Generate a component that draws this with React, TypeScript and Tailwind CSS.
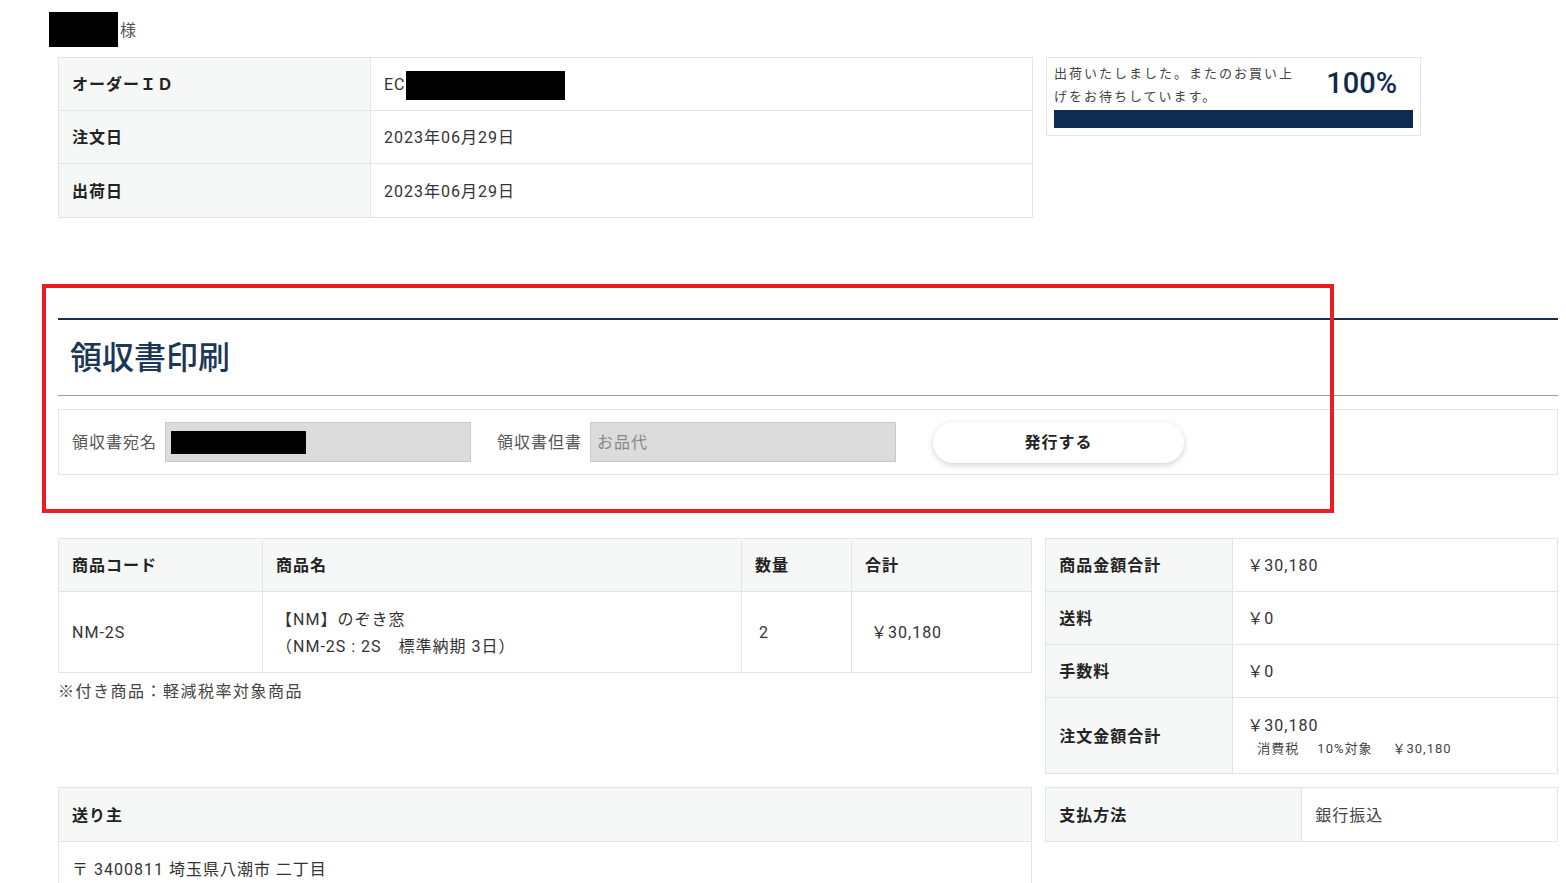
import React from 'react';

const font = { fontFamily: 'Roboto, "Noto Sans CJK JP", sans-serif' };

const Row = ({ label, children, last = false }: { label: string; children: React.ReactNode; last?: boolean }) => (
    <div className={`grid grid-cols-[312px_1fr] h-[53px] ${last ? '' : 'border-b border-[#e3e5e5]'}`}>
        <div className="bg-[#f6f7f7] border-r border-[#e3e5e5] flex items-center px-[13px] pt-[2px] font-semibold text-[#222]">{label}</div>
        <div className="flex items-center px-[13px] pt-[2px] text-[#333]">{children}</div>
    </div>
);

const SumRow = ({ label, children, h = 'h-[53px]', last = false }: { label: string; children: React.ReactNode; h?: string; last?: boolean }) => (
    <div className={`grid grid-cols-[187px_1fr] ${h} ${last ? '' : 'border-b border-[#e3e5e5]'}`}>
        <div className="bg-[#f6f7f7] border-r border-[#e3e5e5] flex items-center px-[13px] pt-[2px] font-semibold text-[#222]">{label}</div>
        <div className="flex flex-col justify-center px-[14px] pt-[2px] text-[#333]">{children}</div>
    </div>
);

export default function App() {
    return (
        <div className="relative w-[1566px] h-[883px] overflow-hidden bg-white text-[16px] tracking-[1px]" style={font}>
            <div className="pt-[12px]">
                <div className="flex items-center ml-[49px] h-[35px]">
                    <div className="w-[69px] h-[35px] bg-black" />
                    <span className="text-[#555] ml-[2px] mt-[2px]">様</span>
                </div>

                <div className="ml-[58px] w-[1500px] mt-[10px]">
                    <div className="flex items-start gap-[13px]">
                        <div className="w-[975px] border border-[#e3e5e5]">
                            <Row label="オーダーＩＤ">
                                <span>EC</span>
                                <span className="inline-block w-[159px] h-[29px] bg-black" />
                            </Row>
                            <Row label="注文日">2023年06月29日</Row>
                            <Row label="出荷日" last>2023年06月29日</Row>
                        </div>
                        <div className="w-[375px] h-[79px] border border-[#e3e5e5] px-[7px] pt-[4px]">
                            <div className="flex items-center justify-between">
                                <p className="text-[13px] leading-[23px] text-[#444] tracking-[2px] w-[250px]">
                                    出荷いたしました。またのお買い上げをお待ちしています。
                                </p>
                                <span className="text-[29px] font-medium tracking-normal text-[#102b4e] mr-[16px] mb-[2px]">100%</span>
                            </div>
                            <div className="h-[18px] bg-[#0f2c50] mt-[2px]" />
                        </div>
                    </div>

                    <div className="mt-[100px] border-t-2 border-[#15304f]">
                        <h2 className="text-[32px] font-medium text-[#1b3657] pl-[12px] h-[75px] flex items-center tracking-normal">領収書印刷</h2>
                        <div className="border-t border-[#9a9a9a]" />
                        <div className="mt-[13px] h-[66px] border border-[#e3e5e5] flex items-center px-[13px] text-[#555]">
                            <span className="pt-[2px]">領収書宛名</span>
                            <div className="ml-[8px] w-[306px] h-[40px] bg-[#dcdcdc] border border-[#c9c9c9] flex items-center px-[5px]">
                                <div className="w-[135px] h-[23px] bg-black" />
                            </div>
                            <span className="ml-[26px] pt-[2px]">領収書但書</span>
                            <div className="ml-[8px] w-[306px] h-[40px] bg-[#dcdcdc] border border-[#c9c9c9] flex items-center px-[6px] pt-[2px] text-[#888]">
                                お品代
                            </div>
                            <button className="ml-[37px] w-[251px] h-[41px] rounded-full bg-white shadow-[0_2px_6px_rgba(0,0,0,0.18)] font-semibold text-[#222] tracking-[1px] pt-[2px]">
                                発行する
                            </button>
                        </div>
                    </div>

                    <div className="flex items-start gap-[13px] mt-[63px]">
                        <div className="w-[975px]">
                            <div className="border border-[#e3e5e5]">
                                <div className="grid grid-cols-[204px_479px_110px_1fr] h-[53px] pt-[2px] bg-[#f6f7f7] border-b border-[#e3e5e5] font-semibold text-[#222]">
                                    <div className="flex items-center px-[13px] border-r border-[#e3e5e5]">商品コード</div>
                                    <div className="flex items-center px-[13px] border-r border-[#e3e5e5]">商品名</div>
                                    <div className="flex items-center px-[13px] border-r border-[#e3e5e5]">数量</div>
                                    <div className="flex items-center px-[13px]">合計</div>
                                </div>
                                <div className="grid grid-cols-[204px_479px_110px_1fr] h-[80px] text-[#333]">
                                    <div className="flex items-center px-[13px] pt-[2px] border-r border-[#e3e5e5]">NM-2S</div>
                                    <div className="flex flex-col justify-center px-[13px] pt-[2px] border-r border-[#e3e5e5] leading-[27px]">
                                        <span>【NM】のぞき窓</span>
                                        <span>（NM-2S : 2S　標準納期 3日）</span>
                                    </div>
                                    <div className="flex items-center px-[17px] pt-[2px] border-r border-[#e3e5e5]">2</div>
                                    <div className="flex items-center px-[19px] pt-[2px]">￥30,180</div>
                                </div>
                            </div>
                            <p className="mt-[7px] text-[#444] tracking-[1.5px]">※付き商品：軽減税率対象商品</p>
                        </div>
                        <div className="w-[513px] border border-[#e3e5e5]">
                            <SumRow label="商品金額合計">￥30,180</SumRow>
                            <SumRow label="送料">￥0</SumRow>
                            <SumRow label="手数料">￥0</SumRow>
                            <SumRow label="注文金額合計" h="h-[75px]" last>
                                <span className="leading-[22px] mt-[2px]">￥30,180</span>
                                <span className="text-[13px] text-[#444] pl-[10px] leading-[24px]">
                                    消費税<span className="ml-[18px]">10%対象</span><span className="ml-[20px]">￥30,180</span>
                                </span>
                            </SumRow>
                        </div>
                    </div>

                    <div className="flex items-start gap-[13px] mt-[13px]">
                        <div className="w-[975px] border border-[#e3e5e5]">
                            <div className="h-[54px] bg-[#f6f7f7] border-b border-[#e3e5e5] flex items-center px-[13px] pt-[2px] font-semibold text-[#222]">送り主</div>
                            <div className="h-[54px] flex items-center px-[13px] pt-[2px] text-[#333]">〒 3400811 埼玉県八潮市 二丁目</div>
                        </div>
                        <div className="w-[513px] h-[55px] border border-[#e3e5e5] grid grid-cols-[256px_1fr]">
                            <div className="bg-[#f6f7f7] border-r border-[#e3e5e5] flex items-center px-[13px] pt-[2px] font-semibold text-[#222]">支払方法</div>
                            <div className="flex items-center px-[13px] pt-[2px] text-[#444]">銀行振込</div>
                        </div>
                    </div>
                </div>
            </div>

            <div className="absolute left-[42px] top-[284px] w-[1292px] h-[229px] border-[4px] border-[#ec1c24] pointer-events-none" />
        </div>
    );
}
